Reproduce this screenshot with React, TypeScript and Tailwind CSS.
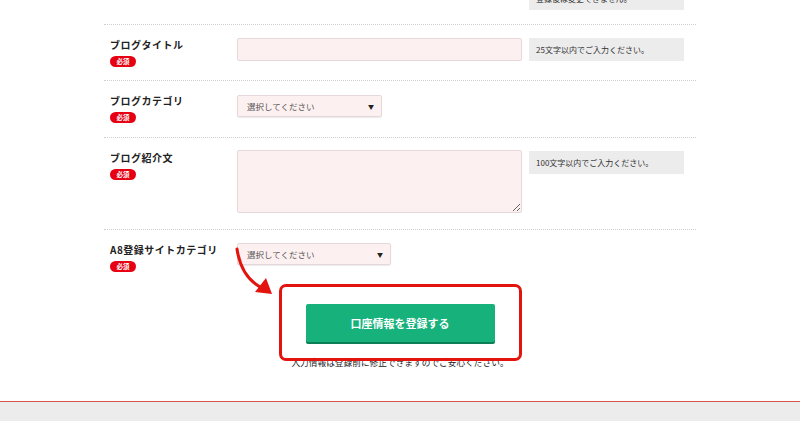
import React from "react";

const font = { fontFamily: '"Noto Sans CJK JP", "Noto Sans", sans-serif' };

function Badge() {
  return (
    <span className="mt-[3px] flex h-[11px] w-[26px] items-center justify-center rounded-full bg-[#e60012] text-[6.5px] font-bold leading-none text-white">
      必須
    </span>
  );
}

function Label({ text }: { text: string }) {
  return (
    <div className="flex w-[133px] shrink-0 flex-col pl-[6px]">
      <span className="text-[10px] font-bold leading-[16px] tracking-[0.05em] text-[#222]">{text}</span>
      <Badge />
    </div>
  );
}

function Hint({ text }: { text: string }) {
  return (
    <div className="ml-[7px] mt-[1px] flex h-[23px] w-[155px] items-center bg-[#ececec] pl-[7px] text-[8px] text-[#333]">
      {text}
    </div>
  );
}

function FakeSelect({ width, mt }: { width: string; mt: string }) {
  return (
    <div
      className={`${width} ${mt} flex h-[22px] items-center justify-between rounded-[2px] border border-[#e6d8d8] bg-[#fdf0f0] pl-[9px] pr-[7px] text-[8.5px] text-[#555] shadow-[0_1px_1px_rgba(0,0,0,0.08)]`}
    >
      <span>選択してください</span>
      <span className="text-[6px] text-[#222]">▼</span>
    </div>
  );
}

export default function App() {
  return (
    <div className="relative flex h-[421px] w-full flex-col overflow-hidden bg-white" style={font}>
      <div className="mx-auto w-[592px]">
        {/* 前の行の下端 */}
        <div className="h-[24px] overflow-hidden">
          <div className="mt-[-14px] flex">
            <div className="w-[133px] shrink-0" />
            <div className="w-[285px]" />
            <Hint text="登録後は変更できません。" />
          </div>
        </div>

        <div className="flex items-start border-t border-dotted border-[#cfcfcf] pb-[13px] pt-[12px]">
          <Label text="ブログタイトル" />
          <div className="mt-[1px] h-[23px] w-[285px] rounded-[2px] border border-[#e6d8d8] bg-[#fdf0f0]" />
          <Hint text="25文字以内でご入力ください。" />
        </div>

        <div className="flex items-start border-t border-dotted border-[#cfcfcf] pb-[14px] pt-[12px]">
          <Label text="ブログカテゴリ" />
          <FakeSelect width="w-[145px]" mt="mt-[2px]" />
        </div>

        <div className="flex items-start border-t border-dotted border-[#cfcfcf] pb-[14px] pt-[12px]">
          <Label text="ブログ紹介文" />
          <textarea className="mb-[2px] h-[63px] w-[285px] rounded-[2px] border border-[#e6d8d8] bg-[#fdf0f0] outline-none" />
          <Hint text="100文字以内でご入力ください。" />
        </div>

        <div className="flex items-start border-t border-dotted border-[#cfcfcf] pb-[13px] pt-[12px]">
          <Label text="A8登録サイトカテゴリ" />
          <FakeSelect width="w-[154px]" mt="mt-[1px]" />
        </div>

        <div className="flex flex-col items-center pt-[19px]">
          <div className="relative">
            <button
              type="button"
              className="flex h-[38px] w-[189px] items-center justify-center rounded-[2px] bg-[#17b27b] text-[11px] font-bold text-white shadow-[0_2px_0_#0d7f56]"
            >
              口座情報を登録する
            </button>
          </div>
          <p className="relative z-0 mt-[15px] text-[8.7px] leading-[12px] text-[#222]">
            入力情報は登録前に修正できますのでご安心ください。
          </p>
        </div>
      </div>

      <div className="mt-auto h-[1px] bg-[#d9534f]" />
      <div className="h-[19px] bg-[#ececec]" />

      {/* 注釈: 赤枠と矢印 */}
      <div className="pointer-events-none absolute left-[279px] top-[284px] h-[77px] w-[243px] rounded-[7px] border-[3px] border-[#e3140d]" />
      <svg className="pointer-events-none absolute left-0 top-0" width="800" height="421" viewBox="0 0 800 421">
        <path d="M237 249 Q241 276 260 287" fill="none" stroke="#e3140d" strokeWidth="3" strokeLinecap="round" />
        <polygon points="272,294 255,292 266,278" fill="#e3140d" />
      </svg>
    </div>
  );
}
